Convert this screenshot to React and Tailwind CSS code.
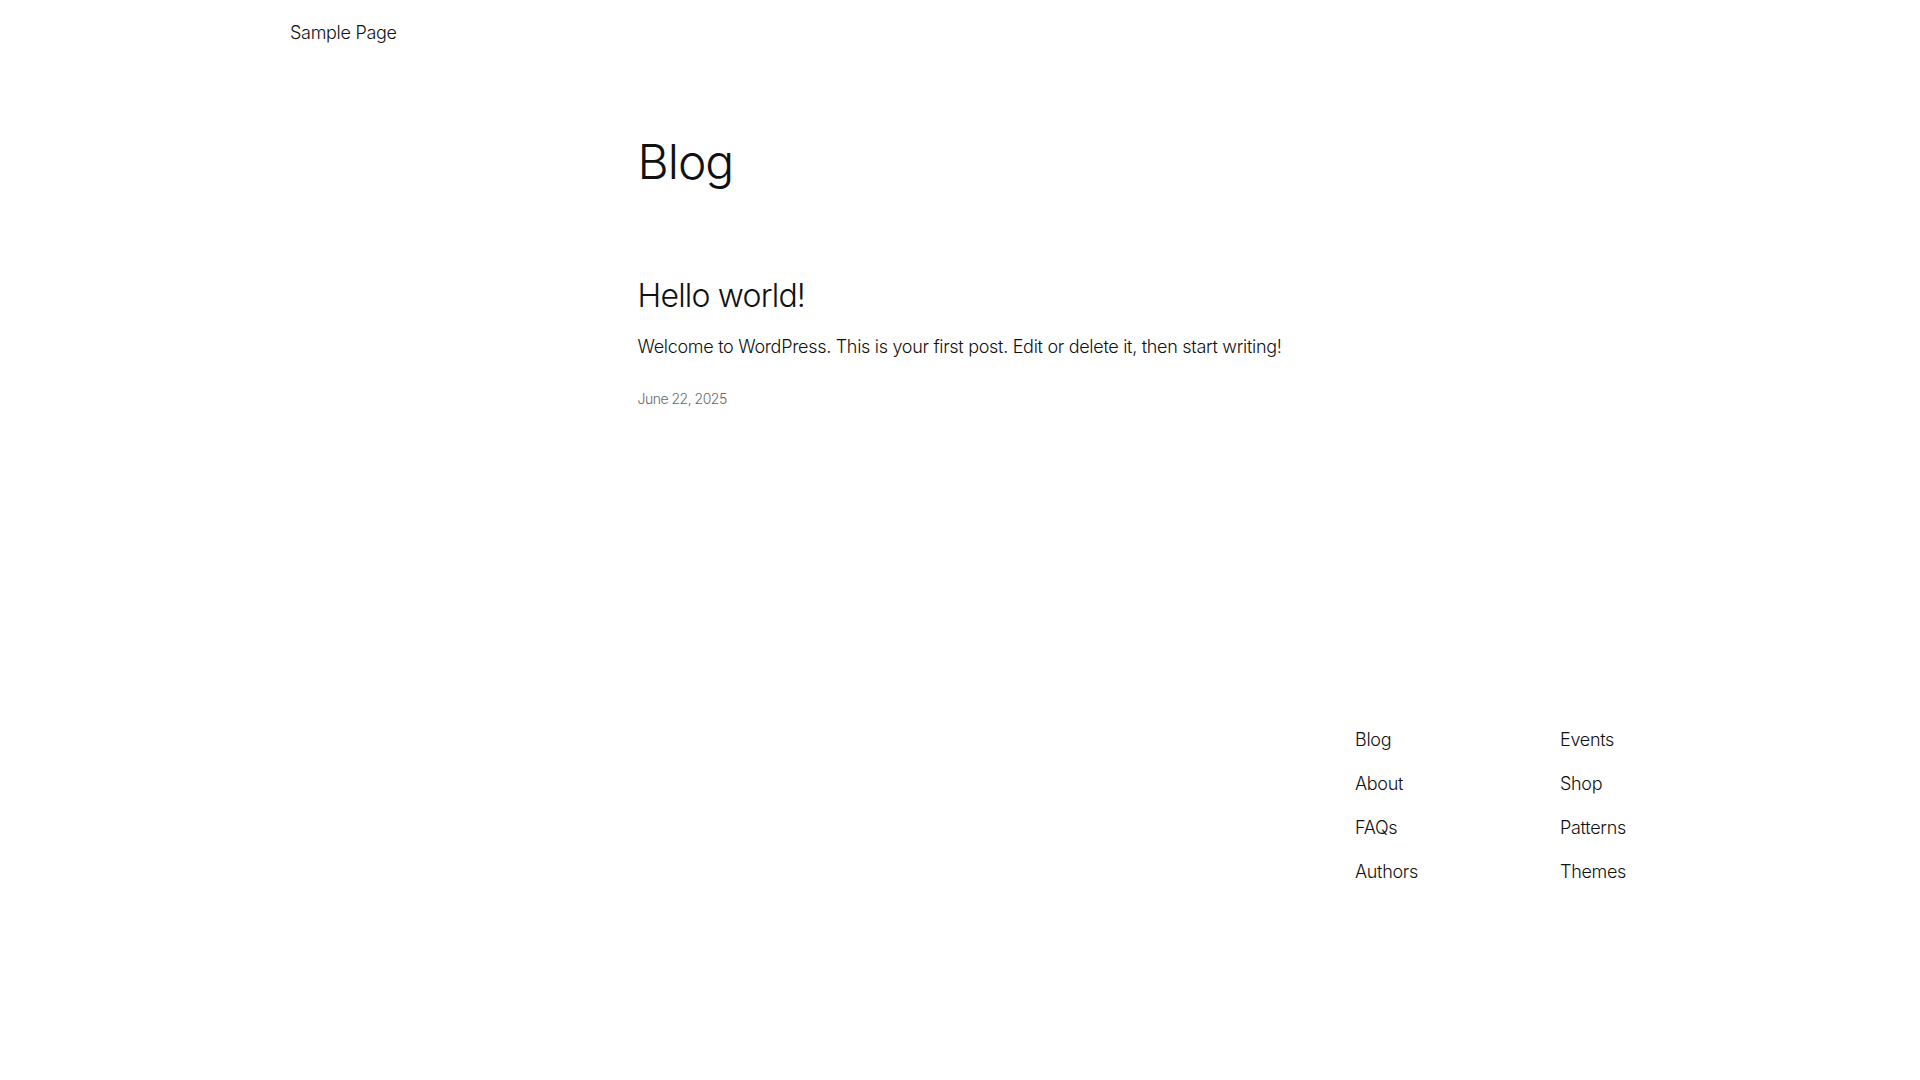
const footerLeft = ['Blog', 'About', 'FAQs', 'Authors']
const footerRight = ['Events', 'Shop', 'Patterns', 'Themes']

function FooterNav({ items, className }) {
  return (
    <ul className={`flex flex-col gap-[17px] ${className}`}>
      {items.map((item) => (
        <li key={item}>
          <a href="#" className="block text-[18px] leading-[27px] text-[#111111]">
            {item}
          </a>
        </li>
      ))}
    </ul>
  )
}

export default function App() {
  return (
    <div className="min-h-screen bg-white font-['Inter','Liberation_Sans',sans-serif] font-light tracking-[-0.3px] text-[#111111]">
      <header className="mx-auto w-[1340px] pt-[19px]">
        <nav>
          <a href="#" className="text-[18px] leading-[27px]">
            Sample Page
          </a>
        </nav>
      </header>

      <main className="mx-auto w-[645px]">
        <h1 className="mt-[92px] text-[48px] leading-[48px] tracking-[-1px]">Blog</h1>

        <article className="mt-[90px]">
          <h2 className="text-[32px] leading-[40px] tracking-[-0.8px]">
            <a href="#">Hello world!</a>
          </h2>
          <p className="mt-[17px] whitespace-nowrap text-[18px] leading-[27px] tracking-[-0.3px]">
            Welcome to WordPress. This is your first post. Edit or delete it, then start writing!
          </p>
          <time className="mt-[28px] block text-[14px] leading-[21px] tracking-[-0.5px] text-[#686868]">
            June 22, 2025
          </time>
        </article>
      </main>

      <footer className="mx-auto mt-[317px] flex w-[1340px] justify-end pb-[80px]">
        <div className="grid grid-cols-[205px_70px]">
          <FooterNav items={footerLeft} />
          <FooterNav items={footerRight} />
        </div>
      </footer>
    </div>
  )
}
